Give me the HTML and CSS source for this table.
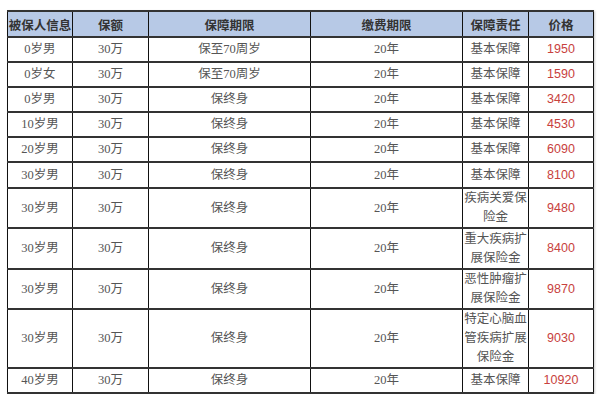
FILE: index.html
```html
<!DOCTYPE html>
<html lang="zh-CN">
<head>
<meta charset="utf-8">
<link rel="stylesheet" href="styles.css">
</head>
<body>
<table class="tbl">
  <colgroup>
    <col class="c1"><col class="c2"><col class="c3"><col class="c4"><col class="c5"><col class="c6">
  </colgroup>
  <thead>
    <tr class="h"><th>被保人信息</th><th>保额</th><th>保障期限</th><th>缴费期限</th><th>保障责任</th><th>价格</th></tr>
  </thead>
  <tbody>
    <tr class="r1"><td>0岁男</td><td>30万</td><td>保至70周岁</td><td>20年</td><td>基本保障</td><td class="p">1950</td></tr>
    <tr class="r1"><td>0岁女</td><td>30万</td><td>保至70周岁</td><td>20年</td><td>基本保障</td><td class="p">1590</td></tr>
    <tr class="r1"><td>0岁男</td><td>30万</td><td>保终身</td><td>20年</td><td>基本保障</td><td class="p">3420</td></tr>
    <tr class="r1"><td>10岁男</td><td>30万</td><td>保终身</td><td>20年</td><td>基本保障</td><td class="p">4530</td></tr>
    <tr class="r1"><td>20岁男</td><td>30万</td><td>保终身</td><td>20年</td><td>基本保障</td><td class="p">6090</td></tr>
    <tr class="r1b"><td>30岁男</td><td>30万</td><td>保终身</td><td>20年</td><td>基本保障</td><td class="p">8100</td></tr>
    <tr class="r2a"><td>30岁男</td><td>30万</td><td>保终身</td><td>20年</td><td class="w">疾病关爱保险金</td><td class="p">9480</td></tr>
    <tr class="r2b"><td>30岁男</td><td>30万</td><td>保终身</td><td>20年</td><td class="w">重大疾病扩展保险金</td><td class="p">8400</td></tr>
    <tr class="r2c"><td>30岁男</td><td>30万</td><td>保终身</td><td>20年</td><td class="w">恶性肿瘤扩展保险金</td><td class="p">9870</td></tr>
    <tr class="r3"><td>30岁男</td><td>30万</td><td>保终身</td><td>20年</td><td class="w">特定心脑血管疾病扩展保险金</td><td class="p">9030</td></tr>
    <tr class="r1"><td>40岁男</td><td>30万</td><td>保终身</td><td>20年</td><td>基本保障</td><td class="p">10920</td></tr>
  </tbody>
</table>
</body>
</html>
```

FILE: styles.css
```css
html, body {
  margin: 0;
  padding: 0;
  background: #ffffff;
}

.tbl {
  margin: 10px 0 0 7px;
  width: 586px;
  table-layout: fixed;
  border-collapse: collapse;
  font-family: "Liberation Serif", "Noto Sans CJK SC", serif;
  font-size: 12.5px;
  color: #555555;
  box-shadow: 1px 1px 2px rgba(0,0,0,0.2);
}

.c1 { width: 65px; }
.c2 { width: 76px; }
.c3 { width: 162px; }
.c4 { width: 152px; }
.c5 { width: 66px; }
.c6 { width: 65px; }

.tbl th,
.tbl td {
  border-left: 1px solid #111;
  border-right: 1px solid #111;
  border-top: 2px solid #333;
  border-bottom: 2px solid #333;
  padding: 0;
  text-align: center;
  vertical-align: middle;
  line-height: 19px;
}

.tbl th {
  background: #b7c9e6;
  font-family: "Noto Sans CJK SC", sans-serif;
  font-weight: bold;
  color: #333;
  font-size: 12.5px;
}

.h { height: 26px; }
.r1 { height: 25px; }
.r1b { height: 26px; }
.r2a { height: 38px; }
.r2b { height: 41px; }
.r2c { height: 39px; }
.r3 { height: 59px; }

.tbl td.w {
  padding: 0 1px;
  word-break: break-all;
}

.tbl td.p {
  font-family: "Liberation Sans", sans-serif;
  color: #c8413d;
  font-size: 12.5px;
}
```
